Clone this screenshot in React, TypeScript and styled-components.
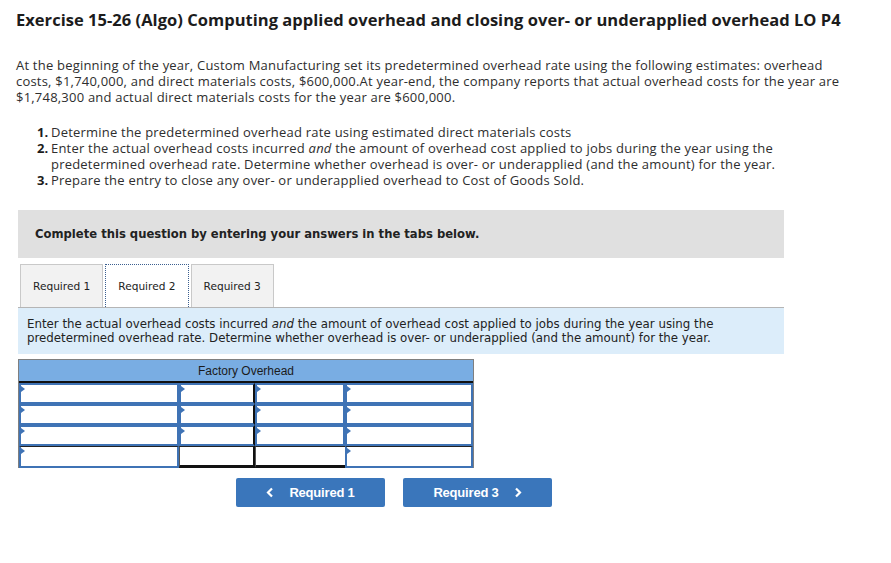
import React from 'react';
import styled, { createGlobalStyle } from 'styled-components';

const GlobalStyle = createGlobalStyle`
  html, body {
    margin: 0;
    padding: 0;
    background: #ffffff;
  }
`;

const Page = styled.div`
  width: 891px;
  min-height: 563px;
  padding: 10px 0 0 16px;
  box-sizing: border-box;
  color: #2e2e2e;
  font-family: 'Open Sans', 'Liberation Sans', sans-serif;
`;

const Title = styled.h1`
  margin: 0 0 27px;
  font-size: 16.5px;
  font-weight: 700;
  color: #1c1c1c;
  line-height: 20px;
  letter-spacing: 0.03px;
  white-space: nowrap;
`;

const Paragraph = styled.p`
  margin: 0 0 19px;
  font-size: 13px;
  line-height: 16px;
  letter-spacing: 0.21px;
  width: 840px;
`;

const Steps = styled.ol`
  list-style: none;
  margin: 0 0 22px;
  padding: 0 0 0 21px;
  font-size: 13px;
  line-height: 16px;
  letter-spacing: 0.21px;
`;

const Step = styled.li`
  display: flex;
  width: 770px;
`;

const StepNo = styled.b`
  flex: none;
  width: 14px;
  font-weight: 700;
  letter-spacing: 0;
  color: #1c1c1c;
`;

const Instruction = styled.div`
  width: 766px;
  height: 48px;
  margin-left: 2px;
  box-sizing: border-box;
  padding: 0 17px;
  display: flex;
  align-items: center;
  background: #e0e0e0;
  font-family: 'DejaVu Sans', Verdana, sans-serif;
  font-weight: 700;
  font-size: 11.6px;
  color: #222;
`;

const TabBar = styled.div`
  display: flex;
  gap: 2px;
  margin: 6px 0 0 4px;
  height: 43px;
`;

const Tab = styled.div<{ $active?: boolean }>`
  box-sizing: border-box;
  height: 43px;
  padding: 0 12px;
  display: flex;
  align-items: center;
  font-family: 'DejaVu Sans', Verdana, sans-serif;
  font-size: 10.6px;
  color: #222;
  background: ${(p) => (p.$active ? '#ffffff' : '#f2f2f2')};
  border: ${(p) => (p.$active ? '1px dotted #3b5f8f' : '1px solid #c9c9c9')};
  border-bottom: none;
`;

const Panel = styled.div`
  width: 766px;
  height: 47px;
  margin-left: 2px;
  box-sizing: border-box;
  padding: 9px 9px 0;
  background: #dcedfa;
  border-top: 1px solid #b5b5b5;
  font-family: 'DejaVu Sans', Verdana, sans-serif;
  font-size: 11.8px;
  line-height: 14px;
  color: #222;
`;

const TAccount = styled.div`
  margin: 5px 0 0 2px;
  width: 456px;
  box-sizing: border-box;
  border: 1px solid #7f7f7f;
  border-bottom: none;
  display: grid;
  grid-template-columns: 160px 76px 90px 128px;
`;

const Header = styled.div`
  grid-column: 1 / -1;
  height: 21px;
  display: flex;
  align-items: center;
  justify-content: center;
  background: #79ade3;
  border-bottom: 2px solid #111;
  font-family: 'Liberation Sans', Arial, sans-serif;
  font-size: 12px;
  color: #1b1b1b;
`;

const Cell = styled.div<{ $input?: boolean; $rule?: boolean; $total?: boolean; $base?: boolean }>`
  position: relative;
  box-sizing: border-box;
  height: ${(p) => (p.$total ? '22px' : '21px')};
  background: #fff;
  border: ${(p) => (p.$input ? '2px solid #3f73b5' : 'none')};
  border-right: ${(p) => (p.$rule ? '2px solid #111' : p.$input ? '2px solid #3f73b5' : 'none')};
  border-top: ${(p) => (p.$total ? '1px solid #222' : p.$input ? '2px solid #3f73b5' : 'none')};
  border-bottom: ${(p) =>
    p.$base ? '3px solid #111' : p.$input ? '2px solid #3f73b5' : 'none'};
  ${(p) => (p.$total && !p.$input ? 'border-left: 1px solid #555;' : '')}

  ${(p) =>
    p.$input &&
    `
    &::before {
      content: '';
      position: absolute;
      left: 0;
      top: 1px;
      border-top: 3px solid transparent;
      border-bottom: 3px solid transparent;
      border-left: 4px solid #3f73b5;
    }
  `}
`;

const Nav = styled.div`
  display: flex;
  gap: 18px;
  margin: 10px 0 0 220px;
`;

const NavButton = styled.button`
  width: 149px;
  height: 29px;
  display: flex;
  align-items: center;
  justify-content: center;
  gap: 15px;
  border: none;
  border-radius: 2px;
  background: #3a76bb;
  color: #fff;
  font-family: 'Liberation Sans', Arial, sans-serif;
  font-weight: 700;
  font-size: 13px;
  letter-spacing: -0.2px;
  cursor: pointer;
`;

const Chevron: React.FC<{ dir: 'left' | 'right' }> = ({ dir }) => (
  <svg width="8" height="11" viewBox="0 0 8 11">
    <path
      d={dir === 'left' ? 'M6 1.5 L2 5.5 L6 9.5' : 'M2 1.5 L6 5.5 L2 9.5'}
      stroke="#fff"
      strokeWidth="2.2"
      fill="none"
    />
  </svg>
);

const rows = [0, 1, 2];

const App: React.FC = () => (
  <Page>
    <GlobalStyle />
    <Title>
      Exercise 15-26 (Algo) Computing applied overhead and closing over- or underapplied overhead LO P4
    </Title>
    <Paragraph>
      At the beginning of the year, Custom Manufacturing set its predetermined overhead rate using the following
      estimates: overhead costs, $1,740,000, and direct materials costs, $600,000.At year-end, the company reports
      that actual overhead costs for the year are $1,748,300 and actual direct materials costs for the year are
      $600,000.
    </Paragraph>
    <Steps>
      <Step>
        <StepNo>1.</StepNo>
        <span>Determine the predetermined overhead rate using estimated direct materials costs</span>
      </Step>
      <Step>
        <StepNo>2.</StepNo>
        <span>
          Enter the actual overhead costs incurred <i>and</i> the amount of overhead cost applied to jobs during the
          year using the predetermined overhead rate. Determine whether overhead is over- or underapplied (and the
          amount) for the year.
        </span>
      </Step>
      <Step>
        <StepNo>3.</StepNo>
        <span>Prepare the entry to close any over- or underapplied overhead to Cost of Goods Sold.</span>
      </Step>
    </Steps>
    <Instruction>Complete this question by entering your answers in the tabs below.</Instruction>
    <TabBar>
      <Tab>Required 1</Tab>
      <Tab $active>Required 2</Tab>
      <Tab>Required 3</Tab>
    </TabBar>
    <Panel>
      Enter the actual overhead costs incurred <i>and</i> the amount of overhead cost applied to jobs during the year
      using the predetermined overhead rate. Determine whether overhead is over- or underapplied (and the amount) for
      the year.
    </Panel>
    <TAccount>
      <Header>Factory Overhead</Header>
      {rows.map((r) => (
        <React.Fragment key={r}>
          <Cell $input />
          <Cell $input $rule />
          <Cell $input />
          <Cell $input />
        </React.Fragment>
      ))}
      <Cell $input $total />
      <Cell $total $rule $base />
      <Cell $total $base />
      <Cell $input $total />
    </TAccount>
    <Nav>
      <NavButton>
        <Chevron dir="left" />
        Required 1
      </NavButton>
      <NavButton>
        Required 3
        <Chevron dir="right" />
      </NavButton>
    </Nav>
  </Page>
);

export default App;
